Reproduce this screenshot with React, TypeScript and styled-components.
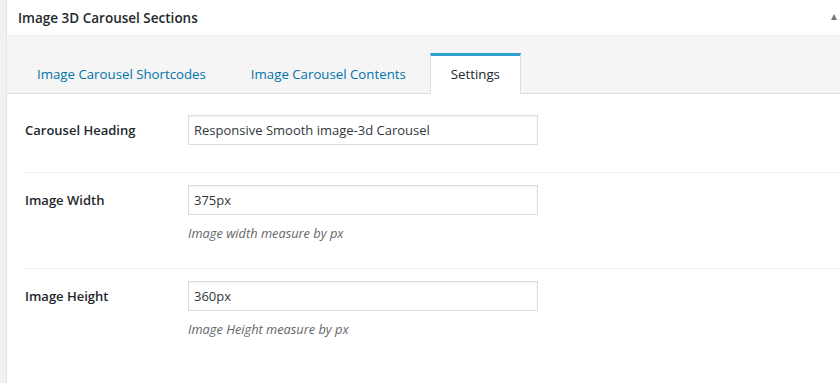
import styled, { createGlobalStyle } from 'styled-components'

const GlobalStyle = createGlobalStyle`
  html, body {
    margin: 0;
    padding: 0;
    background: #f1f1f1;
  }
  body {
    font-family: 'Open Sans', 'Noto Sans', sans-serif;
    color: #23282d;
  }
  * {
    box-sizing: border-box;
  }
`

const Page = styled.div`
  padding-left: 6px;
  height: 383px;
  overflow: hidden;
`

const Panel = styled.div`
  background: #fff;
  border-left: 1px solid #e5e5e5;
  height: 100%;
`

const PanelHeader = styled.div`
  height: 36px;
  display: flex;
  align-items: center;
  justify-content: space-between;
  padding: 0 3px 0 11px;
  border-bottom: 1px solid #eeeeee;
`

const PanelTitle = styled.h2`
  margin: 0;
  font-size: 13.5px;
  font-weight: 600;
  color: #23282d;
`

const Toggle = styled.span`
  width: 0;
  height: 0;
  border-left: 3.5px solid transparent;
  border-right: 3.5px solid transparent;
  border-bottom: 6px solid #72777c;
  margin-top: -1px;
`

const TabBar = styled.div`
  height: 58px;
  display: flex;
  align-items: flex-end;
  padding-left: 9px;
  background: #f5f5f5;
  border-bottom: 1px solid #dddddd;
`

const Tab = styled.div<{ $active?: boolean }>`
  height: 41px;
  margin-right: 3px;
  margin-bottom: -1px;
  padding: 0 20px 2px;
  display: flex;
  align-items: center;
  font-size: 13.25px;
  color: ${({ $active }) => ($active ? '#23282d' : '#0073aa')};
  background: ${({ $active }) => ($active ? '#fff' : 'transparent')};
  border: 1px solid ${({ $active }) => ($active ? '#dddddd' : 'transparent')};
  border-top: 3px solid ${({ $active }) => ($active ? '#2ea2cc' : 'transparent')};
  border-bottom-color: ${({ $active }) => ($active ? '#fff' : 'transparent')};
`

const Settings = styled.div`
  padding: 9px 0 0 17px;
`

const Row = styled.div<{ $first?: boolean }>`
  display: flex;
  padding: 12px 0 ${({ $first }) => ($first ? '27px' : '26px')};
  border-top: ${({ $first }) => ($first ? 'none' : '1px solid #eeeeee')};
`

const Label = styled.label`
  width: 164px;
  padding: 6px 0 0 1px;
  font-size: 13px;
  font-weight: 600;
  color: #23282d;
`

const Field = styled.div`
  display: flex;
  flex-direction: column;
`

const TextInput = styled.input`
  width: 350px;
  height: 30px;
  margin: 0;
  padding: 3px 5px;
  border: 1px solid #dddddd;
  box-shadow: inset 0 1px 2px rgba(0, 0, 0, 0.07);
  font-family: 'Open Sans', 'Noto Sans', sans-serif;
  font-size: 13px;
  color: #32373c;
  outline: none;
`

const Description = styled.p`
  margin: 9px 0 0;
  font-size: 12.8px;
  font-style: italic;
  color: #666;
`

const fields = [
  { label: 'Carousel Heading', value: 'Responsive Smooth image-3d Carousel' },
  { label: 'Image Width', value: '375px', help: 'Image width measure by px' },
  { label: 'Image Height', value: '360px', help: 'Image Height measure by px' },
]

export default function App() {
  return (
    <>
      <GlobalStyle />
      <Page>
        <Panel>
          <PanelHeader>
            <PanelTitle>Image 3D Carousel Sections</PanelTitle>
            <Toggle />
          </PanelHeader>
          <TabBar>
            <Tab>Image Carousel Shortcodes</Tab>
            <Tab>Image Carousel Contents</Tab>
            <Tab $active>Settings</Tab>
          </TabBar>
          <Settings>
            {fields.map((f, i) => (
              <Row key={f.label} $first={i === 0}>
                <Label>{f.label}</Label>
                <Field>
                  <TextInput defaultValue={f.value} />
                  {f.help && <Description>{f.help}</Description>}
                </Field>
              </Row>
            ))}
          </Settings>
        </Panel>
      </Page>
    </>
  )
}
